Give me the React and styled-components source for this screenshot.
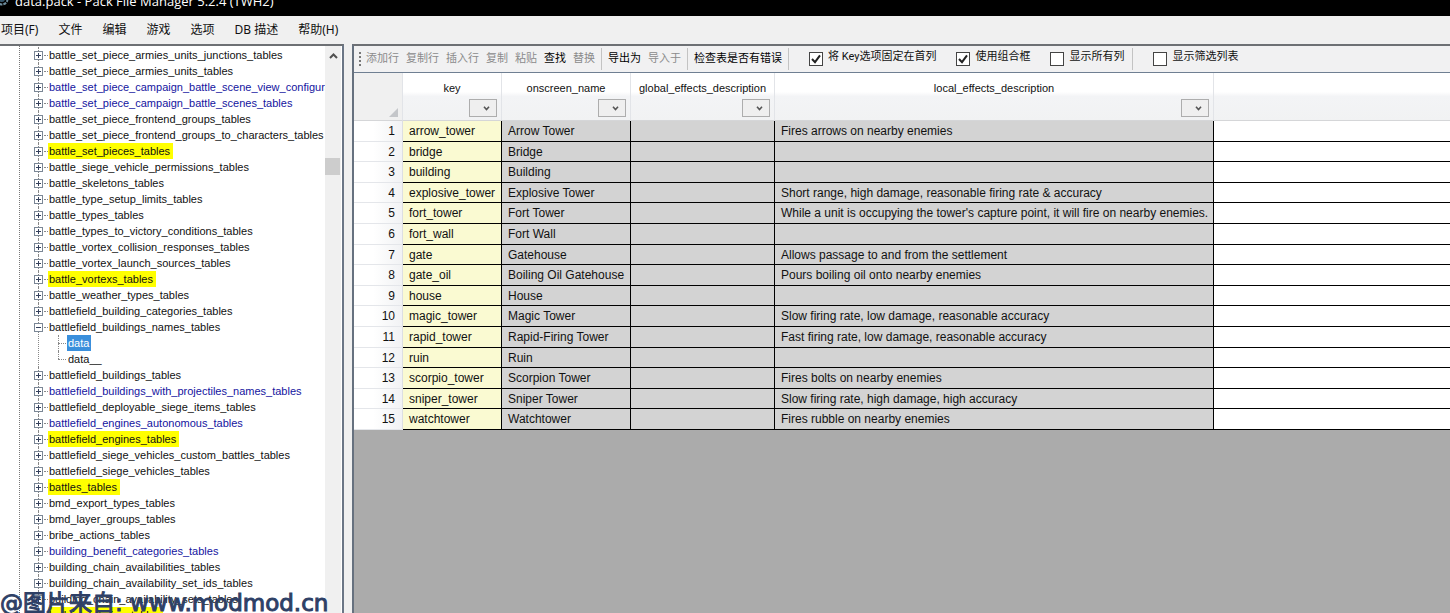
import React from 'react';
import styled, { createGlobalStyle, css } from 'styled-components';

const Global = createGlobalStyle`
  *, *::before, *::after { box-sizing: border-box; }
  body { margin: 0; overflow: hidden; }
  button, input, select { font: inherit; margin: 0; }
`;

const cjk = '"Noto Sans CJK SC", sans-serif';
const ui = `"Noto Sans", ${cjk}`;
const sans = `"Liberation Sans", ${cjk}`;

const Window = styled.div`
  position: relative;
  display: flex;
  flex-direction: column;
  height: 100vh;
  overflow: hidden;
  background: #f0f0f0;
  color: #000;
  font: 11px/16px Roboto, ${cjk};
`;

const TitleBar = styled.header`
  display: flex;
  align-items: flex-end;
  gap: 6px;
  flex: none;
  height: 16px;
  padding-bottom: 7px;
  overflow: hidden;
  background: #000;
  color: #fff;
  font: 13px/16px "Open Sans", ${cjk};
  white-space: nowrap;
  svg { flex: none; }
`;

const Title = styled.h1`
  margin: 0;
  font: inherit;
`;

const MenuBar = styled.nav`
  display: flex;
  align-items: center;
  gap: 20px;
  flex: none;
  height: 28px;
  padding-left: 1px;
  font: 12px/16px ${ui};
`;

const MenuButton = styled.button`
  padding: 0;
  border: 0;
  background: none;
  color: #111;
  white-space: nowrap;
`;

const Workspace = styled.div`
  display: flex;
  flex: 1;
  gap: 8px;
  min-height: 0;
`;

const Sidebar = styled.aside`
  display: flex;
  flex: none;
  width: 344px;
  padding-right: 1px;
  border-top: 2px solid #6d7074;
  border-right: 2px solid #6b7686;
  background: #fff;
  overflow: hidden;
`;

const Tree = styled.ul`
  flex: 1;
  min-width: 0;
  margin: 0 0 0 19px;
  padding: 1px 0 0 14px;
  border-left: 1px dotted #777;
  list-style: none;
  overflow: hidden;
  font: 11px/16px ${sans};
`;

const Branch = styled.li`
  position: relative;
  &::before {
    content: '';
    position: absolute;
    top: 0;
    bottom: 0;
    left: 4px;
    border-left: 1px dotted #888;
  }
`;

const TreeRow = styled.div`
  display: flex;
  align-items: center;
  height: 16px;
  white-space: nowrap;
`;

const Toggle = styled.button`
  position: relative;
  display: block;
  flex: none;
  width: 9px;
  height: 9px;
  padding: 0;
  border: 0;
  background: #fff;
  svg { display: block; }
`;

const Link = styled.span`
  flex: none;
  width: ${p => (p.$long ? 8 : 4)}px;
  margin: 0 ${p => (p.$long ? 1 : 0)}px 0 ${p => (p.$long ? 0 : 1)}px;
  border-top: 1px dotted #888;
`;

const Label = styled.span`
  height: 16px;
  padding: 0 1px;
  line-height: 16px;
  color: ${p => (p.$tone === 'blue' ? '#1414a0' : '#111')};
  ${p => p.$tone === 'yellow' && css`background: #ff0; padding-right: 3px;`}
  ${p => p.$tone === 'selected' && css`background: #3a8fdc; color: #fff; padding-right: 2px;`}
`;

const Leaves = styled.ul`
  margin: 0;
  padding: 0 0 0 24px;
  list-style: none;
`;

const Leaf = styled.li`
  position: relative;
  &::before {
    content: '';
    position: absolute;
    top: 0;
    left: 0;
    height: ${p => (p.$last ? 8 : 16)}px;
    border-left: 1px dotted #888;
  }
`;

const ScrollBar = styled.div`
  display: flex;
  flex-direction: column;
  flex: none;
  width: 16px;
  padding-top: 6px;
  background: #f0f0f0;
  svg { display: block; margin: 0 auto; }
`;

const Thumb = styled.div`
  width: 15px;
  height: 17px;
  margin-top: 98px;
  background: #cdcdcd;
`;

const Main = styled.main`
  display: flex;
  flex-direction: column;
  flex: 1;
  min-width: 0;
  border-top: 2px solid #6d7074;
  border-left: 2px solid #66717f;
  background: #ababab;
`;

const ToolBar = styled.div`
  display: flex;
  align-items: center;
  flex: none;
  height: 27px;
  padding-left: 5px;
  border-bottom: 1px solid #6f7f92;
  background: #f1f1f2;
  white-space: nowrap;
`;

const Grip = styled.span`
  width: 2px;
  height: 14px;
  margin-right: 5px;
  background: repeating-linear-gradient(#777 0 2px, transparent 2px 4px);
`;

const ToolGroup = styled.div`
  display: flex;
  align-items: center;
  gap: 7px;
  height: 22px;
  padding: 0 6px 0 ${p => (p.$first ? 0 : 6)}px;
  border-right: 1px solid #c3c3c3;
`;

const ToolButton = styled.button`
  padding: 0;
  border: 0;
  background: none;
  color: #000;
  &:disabled { color: #8b8b8b; }
`;

const Options = styled.div`
  display: flex;
  align-items: center;
  gap: 20px;
  height: 22px;
  padding: 0 8px 0 20px;
  border-right: ${p => (p.$last ? 0 : '1px solid #c3c3c3')};
`;

const Option = styled.label`
  display: flex;
  align-items: center;
  gap: 5px;
  color: #111;
`;

const OptionText = styled.span`
  padding-bottom: 5px;
`;

const Check = styled.input`
  appearance: none;
  width: 14px;
  height: 14px;
  border: 1px solid #444;
  background: #fff;
  &:checked {
    background: #fff url("data:image/svg+xml,%3Csvg xmlns='http://www.w3.org/2000/svg' viewBox='0 0 12 12'%3E%3Cpath d='M2 6l3 3.2L10 2.4' fill='none' stroke='%23222' stroke-width='2'/%3E%3C/svg%3E");
  }
`;

const Grid = styled.table`
  width: 100%;
  border-collapse: separate;
  border-spacing: 0;
  table-layout: fixed;
  font: 12px/16px ${sans};
`;

const Col = styled.col`
  width: ${p => (p.$w ? `${p.$w}px` : 'auto')};
`;

const HeadCell = styled.th`
  height: 48px;
  padding: 7px 4px 0 0;
  border-right: 1px solid #e2e4e8;
  border-bottom: 1px solid #d5d6d8;
  background: linear-gradient(#fff 0 40%, #f3f4f6 50%, #f1f2f3);
  font: 11px/16px ${sans};
  color: #111;
  vertical-align: top;
  white-space: nowrap;
  &:first-child { background: #f0f0f0; padding: 0 4px 3px; vertical-align: bottom; }
  &:last-child { border-right: 0; }
  &:first-child svg { display: block; margin-left: auto; }
`;

const HeadText = styled.div`
  padding-left: 4px;
`;

const FilterButton = styled.button`
  display: flex;
  align-items: center;
  justify-content: flex-end;
  width: 28px;
  height: 18px;
  margin: 3px 0 0 auto;
  padding: 0 6px 0 0;
  border: 1px solid #adadad;
  background: #efefef;
`;

const Row = styled.tr`
  height: 21px;
  &:nth-child(5n + 2), &:nth-child(5n + 4) { height: 20px; }
`;

const cell = css`
  padding: 0 6px;
  line-height: 16px;
  border-bottom: 1px solid #000;
  white-space: nowrap;
  text-align: left;
  color: #111;
`;

const RowHead = styled.th`
  ${cell}
  padding-right: 7px;
  border-bottom-color: #e4e6ea;
  border-right: 1px solid #dcdee2;
  background: linear-gradient(90deg, #fff 40%, #f1f2f4);
  font-weight: 400;
  text-align: right;
`;

const Cell = styled.td`
  ${cell}
  border-right: 1px solid #000;
  background: ${p => (p.$key ? '#fafad2' : '#d3d3d3')};
`;

const Blank = styled.td`
  ${cell}
  background: #fff;
`;

const Watermark = styled.div`
  position: absolute;
  left: 0;
  bottom: -4px;
  color: #2e4066;
  font: 23px/28px "DejaVu Sans", ${cjk};
  -webkit-text-stroke: 1px #2e4066;
  white-space: nowrap;
  pointer-events: none;
`;

const tree = [
  ['battle_set_piece_armies_units_junctions_tables'],
  ['battle_set_piece_armies_units_tables'],
  ['battle_set_piece_campaign_battle_scene_view_configurations_tables', 'blue'],
  ['battle_set_piece_campaign_battle_scenes_tables', 'blue'],
  ['battle_set_piece_frontend_groups_tables'],
  ['battle_set_piece_frontend_groups_to_characters_tables'],
  ['battle_set_pieces_tables', 'yellow'],
  ['battle_siege_vehicle_permissions_tables'],
  ['battle_skeletons_tables'],
  ['battle_type_setup_limits_tables'],
  ['battle_types_tables'],
  ['battle_types_to_victory_conditions_tables'],
  ['battle_vortex_collision_responses_tables'],
  ['battle_vortex_launch_sources_tables'],
  ['battle_vortexs_tables', 'yellow'],
  ['battle_weather_types_tables'],
  ['battlefield_building_categories_tables'],
  ['battlefield_buildings_names_tables', null, ['data', 'data__']],
  ['battlefield_buildings_tables'],
  ['battlefield_buildings_with_projectiles_names_tables', 'blue'],
  ['battlefield_deployable_siege_items_tables'],
  ['battlefield_engines_autonomous_tables', 'blue'],
  ['battlefield_engines_tables', 'yellow'],
  ['battlefield_siege_vehicles_custom_battles_tables'],
  ['battlefield_siege_vehicles_tables'],
  ['battles_tables', 'yellow'],
  ['bmd_export_types_tables'],
  ['bmd_layer_groups_tables'],
  ['bribe_actions_tables'],
  ['building_benefit_categories_tables', 'blue'],
  ['building_chain_availabilities_tables'],
  ['building_chain_availability_set_ids_tables'],
  ['building_chain_availability_sets_tables'],
  ['building_chains_tables', 'yellow'],
];

const rows = [
  ['arrow_tower', 'Arrow Tower', 'Fires arrows on nearby enemies'],
  ['bridge', 'Bridge', ''],
  ['building', 'Building', ''],
  ['explosive_tower', 'Explosive Tower', 'Short range, high damage, reasonable firing rate & accuracy'],
  ['fort_tower', 'Fort Tower', "While a unit is occupying the tower's capture point, it will fire on nearby enemies."],
  ['fort_wall', 'Fort Wall', ''],
  ['gate', 'Gatehouse', 'Allows passage to and from the settlement'],
  ['gate_oil', 'Boiling Oil Gatehouse', 'Pours boiling oil onto nearby enemies'],
  ['house', 'House', ''],
  ['magic_tower', 'Magic Tower', 'Slow firing rate, low damage, reasonable accuracy'],
  ['rapid_tower', 'Rapid-Firing Tower', 'Fast firing rate, low damage, reasonable accuracy'],
  ['ruin', 'Ruin', ''],
  ['scorpio_tower', 'Scorpion Tower', 'Fires bolts on nearby enemies'],
  ['sniper_tower', 'Sniper Tower', 'Slow firing rate, high damage, high accuracy'],
  ['watchtower', 'Watchtower', 'Fires rubble on nearby enemies'],
];

const menus = ['项目(F)', '文件', '编辑', '游戏', '选项', 'DB 描述', '帮助(H)'];
const columns = ['key', 'onscreen_name', 'global_effects_description', 'local_effects_description'];

const tools = [
  [['添加行'], ['复制行'], ['插入行'], ['复制'], ['粘贴'], ['查找', true], ['替换']],
  [['导出为', true], ['导入于']],
  [['检查表是否有错误', true]],
];

const ToggleIcon = ({ open }) => (
  <svg width="9" height="9" viewBox="0 0 9 9" fill="none" stroke="#7b8796">
    <rect x="0.5" y="0.5" width="8" height="8" />
    <path d={open ? 'M2 4.5h5' : 'M2 4.5h5M4.5 2v5'} stroke="#34405c" />
  </svg>
);

const Chevron = () => (
  <svg width="7" height="5" viewBox="0 0 7 5" fill="none" stroke="#555" strokeWidth="1.6">
    <path d="M1 .8l2.5 2.7L6 .8" />
  </svg>
);

const CheckOption = ({ text, checked }) => (
  <Option>
    <Check type="checkbox" defaultChecked={checked} />
    <OptionText>{text}</OptionText>
  </Option>
);

export default function App() {
  return (
    <Window>
      <Global />
      <TitleBar>
        <svg width="9" height="16" viewBox="0 0 9 16" fill="none">
          <circle cx="2" cy="6" r="5.5" stroke="#6f8fa0" strokeWidth="2" strokeDasharray="3 1" />
          <circle cx="2" cy="6" r="3" fill="#35566b" />
        </svg>
        <Title>data.pack - Pack File Manager 5.2.4 (TWH2)</Title>
      </TitleBar>
      <MenuBar>
        {menus.map(m => <MenuButton key={m} type="button">{m}</MenuButton>)}
      </MenuBar>
      <Workspace>
        <Sidebar>
          <Tree>
            {tree.map(([name, tone, leaves]) => (
              <Branch key={name}>
                <TreeRow>
                  <Toggle type="button" aria-label={leaves ? 'Collapse' : 'Expand'}><ToggleIcon open={!!leaves} /></Toggle>
                  <Link />
                  <Label $tone={tone}>{name}</Label>
                </TreeRow>
                {leaves && (
                  <Leaves>
                    {leaves.map((leaf, i) => (
                      <Leaf key={leaf} $last={i === leaves.length - 1}>
                        <TreeRow>
                          <Link $long />
                          <Label $tone={i === 0 ? 'selected' : undefined}>{leaf}</Label>
                        </TreeRow>
                      </Leaf>
                    ))}
                  </Leaves>
                )}
              </Branch>
            ))}
          </Tree>
          <ScrollBar>
            <svg width="9" height="8" viewBox="0 0 9 8" fill="none" stroke="#505050" strokeWidth="2">
              <path d="M1 6l3.5-3.5L8 6" />
            </svg>
            <Thumb />
          </ScrollBar>
        </Sidebar>
        <Main>
          <ToolBar>
            <Grip />
            {tools.map((group, i) => (
              <ToolGroup key={i} $first={i === 0}>
                {group.map(([text, on]) => (
                  <ToolButton key={text} type="button" disabled={!on}>{text}</ToolButton>
                ))}
              </ToolGroup>
            ))}
            <Options>
              <CheckOption text="将 Key选项固定在首列" checked />
              <CheckOption text="使用组合框" checked />
              <CheckOption text="显示所有列" />
            </Options>
            <Options $last>
              <CheckOption text="显示筛选列表" />
            </Options>
          </ToolBar>
          <Grid>
            <colgroup>
              <Col $w={49} /><Col $w={99} /><Col $w={129} /><Col $w={144} /><Col $w={439} /><Col />
            </colgroup>
            <thead>
              <tr>
                <HeadCell>
                  <svg width="9" height="9" viewBox="0 0 9 9"><path d="M9 0v9H0z" fill="#c4c6c9" /></svg>
                </HeadCell>
                {columns.map(c => (
                  <HeadCell key={c} scope="col">
                    <HeadText>{c}</HeadText>
                    <FilterButton type="button" aria-label={`Filter ${c}`}><Chevron /></FilterButton>
                  </HeadCell>
                ))}
                <HeadCell />
              </tr>
            </thead>
            <tbody>
              {rows.map(([key, name, local], i) => (
                <Row key={key}>
                  <RowHead scope="row">{i + 1}</RowHead>
                  <Cell $key>{key}</Cell>
                  <Cell>{name}</Cell>
                  <Cell />
                  <Cell>{local}</Cell>
                  <Blank />
                </Row>
              ))}
            </tbody>
          </Grid>
        </Main>
      </Workspace>
      <Watermark>@图片来自: www.modmod.cn</Watermark>
    </Window>
  );
}
